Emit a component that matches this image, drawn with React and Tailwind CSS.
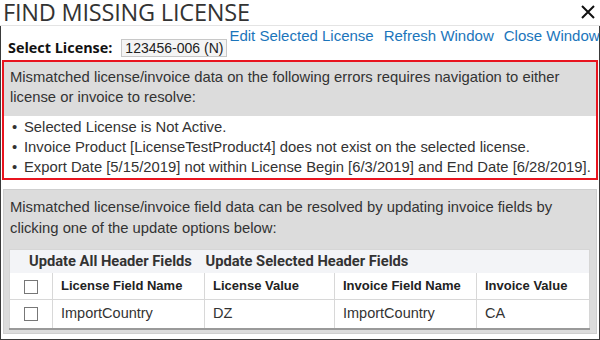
import React from "react";

const arial = { fontFamily: '"Liberation Sans", Arial, sans-serif' };

function Checkbox() {
    return <span className="inline-block w-[14px] h-[14px] border border-[#777] bg-white align-middle"></span>;
}

export default function App() {
    const errors = [
        "Selected License is Not Active.",
        "Invoice Product [LicenseTestProduct4] does not exist on the selected license.",
        "Export Date [5/15/2019] not within License Begin [6/3/2019] and End Date [6/28/2019].",
    ];

    return (
        <div className="w-[600px] h-[340px] bg-white overflow-hidden text-[#333]">

            {/* title bar */}
            <div className="h-[26px] flex items-start justify-between border-b border-[#e4e4e4] pl-[3px] pr-[4px]">
                <span className="text-[23.5px] leading-[25px] font-['Open_Sans',sans-serif] text-[#333] tracking-[-0.2px] whitespace-nowrap">FIND MISSING LICENSE</span>
                <svg width="14" height="14" viewBox="0 0 14 14" className="mt-[5px] mr-[1px]">
                    <path d="M1 1 L13 13 M13 1 L1 13" stroke="#111" strokeWidth="2" />
                </svg>
            </div>

            <div className="h-[314px] border-x border-b border-[#3a3a3a] px-[1px]">

                {/* select row */}
                <div className="h-[34px] flex items-start whitespace-nowrap">
                    <div className="flex items-center shrink-0 mt-[13px] ml-[6px]">
                        <span className="text-[14.4px] leading-[18px] font-bold font-['Open_Sans',sans-serif] text-[#111]">Select License:</span>
                        <span className="ml-[9px] h-[18px] px-[3px] border border-[#c8c8c8] bg-[#f4f4f4] text-[14px] leading-[16px] text-[#222]" style={arial}>123456-006 (N)</span>
                    </div>
                    <div className="flex shrink-0 gap-[10px] ml-[2px] mt-[1px] text-[15px] leading-[18px] text-[#1b75bb]" style={arial}>
                        <span>Edit Selected License</span>
                        <span>Refresh Window</span>
                        <span>Close Window</span>
                    </div>
                </div>

                {/* error box */}
                <div className="border-2 border-[#e8141f] text-[14.8px] leading-[20px]" style={arial}>
                    <div className="bg-[#dcdcdc] px-[6px] pt-[5px] pb-[9px]">
                        Mismatched license/invoice data on the following errors requires navigation to either license or invoice to resolve:
                    </div>
                    <ul className="py-[1px]">
                        {errors.map((e) => (
                            <li key={e} className="flex whitespace-nowrap">
                                <span className="w-[20px] pl-[8px]">•</span>
                                <span>{e}</span>
                            </li>
                        ))}
                    </ul>
                </div>

                {/* resolvable panel */}
                <div className="mt-[9px] mx-[1px] border border-[#cfcfcf] h-[145px] bg-[#dcdcdc]" style={arial}>
                    <div className="px-[6px] pt-[7px] pb-[10px] text-[14.8px] leading-[21px]">
                        Mismatched license/invoice field data can be resolved by updating invoice fields by clicking one of the update options below:
                    </div>
                    <div className="px-[5px] pb-[2px]">
                        <table className="w-[581px] border-collapse bg-white border border-[#d6d6d6] border-b-2 border-b-[#9a9a9a]">
                            <thead>
                                <tr className="bg-[#f3f4f7] h-[23px]">
                                    <th colSpan={2} className="text-left pl-[19px] text-[14.7px] font-bold font-['Roboto',sans-serif] text-[#333] whitespace-nowrap">Update All Header Fields</th>
                                    <th colSpan={3} className="text-left pl-[1px] text-[14.7px] font-bold font-['Roboto',sans-serif] text-[#333] whitespace-nowrap">Update Selected Header Fields</th>
                                </tr>
                                <tr className="h-[27px] text-[13px] font-bold text-[#222]">
                                    <th className="w-[43px] border-r border-b border-[#d8d8d8]"><Checkbox /></th>
                                    <th className="w-[152px] text-left pl-[8px] border-r border-b border-[#d8d8d8]">License Field Name</th>
                                    <th className="w-[130px] text-left pl-[8px] border-r border-b border-[#d8d8d8]">License Value</th>
                                    <th className="w-[142px] text-left pl-[8px] border-r border-b border-[#d8d8d8]">Invoice Field Name</th>
                                    <th className="text-left pl-[8px] border-b border-[#d8d8d8]">Invoice Value</th>
                                </tr>
                            </thead>
                            <tbody>
                                <tr className="h-[29px] text-[14.5px]">
                                    <td className="text-center border-r border-[#d8d8d8]"><Checkbox /></td>
                                    <td className="pl-[8px] border-r border-[#d8d8d8]">ImportCountry</td>
                                    <td className="pl-[8px] border-r border-[#d8d8d8]">DZ</td>
                                    <td className="pl-[8px] border-r border-[#d8d8d8]">ImportCountry</td>
                                    <td className="pl-[8px]">CA</td>
                                </tr>
                            </tbody>
                        </table>
                    </div>
                </div>
            </div>
        </div>
    );
}
